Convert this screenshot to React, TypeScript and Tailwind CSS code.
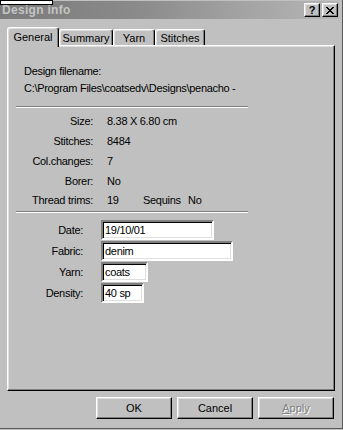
import React from 'react'

const font = { fontFamily: '"Liberation Sans", Arial, sans-serif' }

function CaptionButton({ children }: { children: React.ReactNode }) {
  return (
    <div className="flex h-[14px] w-[16px] items-center justify-center bg-[#c0c0c0] border-t border-l border-t-white border-l-white border-r border-b border-r-black border-b-black shadow-[inset_-1px_-1px_0_#808080,inset_1px_1px_0_#dfdfdf]">
      {children}
    </div>
  )
}

function Tab({ label, width, active }: { label: string; width: number; active?: boolean }) {
  if (active) {
    return (
      <div
        className="relative z-10 -mb-[2px] flex h-[20px] items-start justify-center rounded-t-[3px] bg-[#c0c0c0] border-t border-l border-r border-t-white border-l-white border-r-black pt-[3px] shadow-[inset_-1px_0_0_#808080,inset_1px_1px_0_#dfdfdf]"
        style={{ width }}
      >
        <span className="text-[11px] leading-[13px] text-black">{label}</span>
      </div>
    )
  }
  return (
    <div
      className="flex h-[16px] items-start justify-center rounded-t-[3px] bg-[#c0c0c0] border-t border-l border-r border-t-white border-l-white border-r-black pt-[2px] shadow-[inset_-1px_0_0_#808080,inset_1px_1px_0_#dfdfdf]"
      style={{ width }}
    >
      <span className="text-[11px] leading-[13px] text-black">{label}</span>
    </div>
  )
}

function InfoRow({ label, value, h }: { label: string; value: React.ReactNode; h: string }) {
  return (
    <div className={`flex items-center ${h}`}>
      <div className="w-[84px] text-right">{label}</div>
      <div className="ml-[14px] flex items-center">{value}</div>
    </div>
  )
}

function Field({ label, value, width }: { label: string; value: string; width: number }) {
  return (
    <div className="flex h-[20px] items-center">
      <div className="w-[74px] text-right">{label}</div>
      <div
        className="ml-[18px] flex h-[20px] items-center bg-white border-2 border-t-[#808080] border-l-[#808080] border-b-white border-r-white shadow-[inset_1px_1px_0_#000,inset_-1px_-1px_0_#dfdfdf] pl-[2px]"
        style={{ width }}
      >
        {value}
      </div>
    </div>
  )
}

function Separator() {
  return <div className="ml-[7px] w-[232px] border-t border-b border-t-[#808080] border-b-white" />
}

function DialogButton({ children }: { children: React.ReactNode }) {
  return (
    <div className="flex h-[22px] w-[76px] items-center justify-center bg-[#c0c0c0] border-t border-l border-t-white border-l-white border-r border-b border-r-black border-b-black shadow-[inset_-1px_-1px_0_#808080,inset_1px_1px_0_#dfdfdf] text-[11px]">
      {children}
    </div>
  )
}

export default function App() {
  return (
    <div className="relative h-[430px] w-[343px] overflow-hidden bg-[#c0c0c0] text-[11px] leading-[13px] text-black" style={font}>
      <div className="flex h-[429px] w-[343px] flex-col border-r border-b border-r-[#5a5a5a] border-b-[#5a5a5a]">
        {/* title bar */}
        <div className="mt-[1px] mr-[3px] flex h-[18px] items-center justify-between bg-[linear-gradient(to_right,#7b7b7b,#8a8a8a_40%,#a2a2a2_70%,#b6b6b6)] pl-[2px] pr-[1px]">
          <span className="text-[12px] font-bold tracking-[0.3px] text-[#c4c4c4]">Design info</span>
          <div className="flex gap-[2px]">
            <CaptionButton>
              <span className="text-[11px] font-bold leading-none text-black">?</span>
            </CaptionButton>
            <CaptionButton>
              <svg width="8" height="7" viewBox="0 0 8 7" shapeRendering="crispEdges">
                <path d="M0 0h2v1H0zM6 0h2v1H6zM1 1h2v1H1zM5 1h2v1H5zM2 2h4v1H2zM3 3h2v1H3zM2 4h4v1H2zM1 5h2v1H1zM5 5h2v1H5zM0 6h2v1H0zM6 6h2v1H6z" fill="#000" />
              </svg>
            </CaptionButton>
          </div>
        </div>

        {/* tabs */}
        <div className="mt-[8px] ml-[7px] flex h-[18px] items-end">
          <Tab label="General" width={52} active />
          <Tab label="Summary" width={54} />
          <Tab label="Yarn" width={42} />
          <Tab label="Stitches" width={50} />
        </div>

        {/* panel */}
        <div className="ml-[7px] flex h-[346px] w-[328px] flex-col border-t border-l border-t-white border-l-white border-r border-b border-r-black border-b-black shadow-[inset_-1px_-1px_0_#808080,inset_1px_1px_0_#dfdfdf] pl-[1px] pt-[17px] tracking-[-0.3px]">
          <div className="flex h-[16px] items-center pl-[15px]">Design filename:</div>
          <div className="mt-[1px] flex h-[16px] items-center pl-[15px]">C:\Program Files\coatsedv\Designs\penacho -</div>
          <div className="mt-[10px]">
            <Separator />
          </div>
          <div className="mt-[3px]">
            <InfoRow h="h-[20px]" label="Size:" value="8.38 X 6.80 cm" />
            <InfoRow h="h-[20px]" label="Stitches:" value="8484" />
            <InfoRow h="h-[20px]" label="Col.changes:" value="7" />
            <InfoRow h="h-[20px]" label="Borer:" value="No" />
            <InfoRow
              h="h-[18px]"
              label="Thread trims:"
              value={
                <>
                  <span className="w-[36px]">19</span>
                  <span className="w-[45px]">Sequins</span>
                  <span>No</span>
                </>
              }
            />
          </div>
          <div className="mt-[2px]">
            <Separator />
          </div>
          <div className="mt-[7px] flex flex-col gap-[1px]">
            <Field label="Date:" value="19/10/01" width={113} />
            <Field label="Fabric:" value="denim" width={132} />
            <Field label="Yarn:" value="coats" width={47} />
            <Field label="Density:" value="40 sp" width={43} />
          </div>
        </div>

        {/* buttons */}
        <div className="mt-[6px] mr-[8px] flex justify-end gap-[5px]">
          <DialogButton>OK</DialogButton>
          <DialogButton>Cancel</DialogButton>
          <DialogButton>
            <span className="text-[#808080] [text-shadow:1px_1px_0_#fff]">
              <span className="underline">A</span>pply
            </span>
          </DialogButton>
        </div>
      </div>

      {/* stray white bar over the title */}
      <div className="absolute left-0 top-0 h-[5px] w-[53px] border border-black bg-white" />
    </div>
  )
}
